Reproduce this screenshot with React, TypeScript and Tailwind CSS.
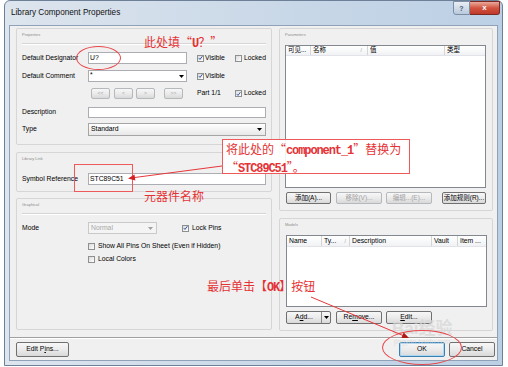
import React from "react";

type Kids = { children?: React.ReactNode; className?: string };

// small windows 7 checkbox
const Check = ({ on }: { on?: boolean }) => (
  <span className="flex h-[7px] w-[7px] shrink-0 items-center justify-center border border-[#8e8f8f] bg-linear-to-br from-[#dadada] to-white">
    {on && (
      <svg width="6" height="6" viewBox="0 0 6 6">
        <path d="M0.9 3.1 L2.4 4.7 L5.3 0.8" fill="none" stroke="#24489c" strokeWidth="1.1" />
      </svg>
    )}
  </span>
);

const Btn = ({
  children,
  className = "",
  disabled,
  primary,
}: Kids & { disabled?: boolean; primary?: boolean }) => (
  <div
    className={`flex items-center justify-center rounded-[2px] border bg-linear-to-b from-[#f7f7f7] via-[#ebebeb] to-[#d9d9d9] ${
      primary ? "border-[#3c7fb1]" : disabled ? "border-[#b5b9bc]" : "border-[#707070]"
    } ${disabled ? "text-[#a3a3a3]" : "text-black"} ${className}`}
  >
    {children}
  </div>
);

const Arrow = ({ dim }: { dim?: boolean }) => (
  <svg width="5" height="3" viewBox="0 0 5 3" className="shrink-0">
    <path d="M0 0 H5 L2.5 3 Z" fill={dim ? "#a0a0a0" : "#000"} />
  </svg>
);

const Group = ({
  title,
  line,
  className = "",
  children,
}: Kids & { title: string; line?: boolean }) => (
  <div className={`flex flex-col rounded-[2px] border border-[#d6d6d6] bg-[#f0f0f0] ${className}`}>
    <div className="pl-[5px] pt-[3px] text-[4px] leading-[5px] text-[#8c8c8c]">{title}</div>
    {line && <div className="mx-[5px] mt-[6px] h-[2px] border-t border-[#d5d5d5] bg-white" />}
    {children}
  </div>
);

const Row = ({ children, className = "" }: Kids) => (
  <div className={`flex items-center pl-[5px] ${className}`}>{children}</div>
);

const Col = ({ children, className = "" }: Kids) => (
  <div className={`flex h-full shrink-0 items-center border-r border-[#d5d5d5] pl-[2px] ${className}`}>
    {children}
  </div>
);

const cjk = "font-['Noto_Sans_CJK_SC',sans-serif]";
const mono = "font-['Liberation_Mono','Noto_Sans_CJK_SC',monospace] font-bold tracking-[-1.1px]";

export default function App() {
  return (
    <div className="relative h-[367px] w-[508px] overflow-hidden bg-white font-['Liberation_Sans','Noto_Sans_CJK_SC',sans-serif] text-[6.8px] leading-none text-black">
      {/* window */}
      <div className="ml-[4px] flex h-[366px] w-[499px] flex-col rounded-t-[6px] border border-[#6e8097] bg-linear-to-r from-[#dde5ee] via-[#cbd9e8] to-[#bcd0e5]">
        {/* title bar */}
        <div className="flex h-[24px] items-start justify-between">
          <div className="pl-[6px] pt-[8px] text-[8.2px] text-[#111]">Library Component Properties</div>
          <div className="mr-[2px] flex">
            <div className="flex h-[14px] w-[17px] items-center justify-center rounded-bl-[3px] border border-[#7a8ea6] bg-linear-to-b from-[#e9eef4] to-[#b9c9dc] text-[7px] font-bold text-[#4a5a6e]">
              ?
            </div>
            <div className="flex h-[14px] w-[30px] items-center justify-center rounded-br-[3px] border border-l-0 border-[#7d2b22] bg-linear-to-b from-[#e9a99c] via-[#d0533f] to-[#c0392b] text-[8px] font-bold text-white">
              x
            </div>
          </div>
        </div>

        {/* client */}
        <div className="mx-[4px] mb-[4px] flex flex-1 flex-col border border-[#8fa2b7] bg-[#f0f0f0]">
          <div className="flex gap-[7px] pl-[6px] pt-[2px]">
            {/* left column */}
            <div className="flex w-[256px] flex-col">
              <Group title="Properties" line className="h-[117px]">
                <Row className="mt-[7px] h-[12px]">
                  <span className="w-[66px]">Default Designator</span>
                  <div className="flex h-full w-[99px] items-center border border-[#abadb3] bg-white pl-[1px]">U?</div>
                  <div className="ml-[10px] flex w-[38px] items-center gap-[1px]">
                    <Check on />
                    Visible
                  </div>
                  <div className="flex items-center gap-[2px]">
                    <Check />
                    Locked
                  </div>
                </Row>
                <Row className="mt-[6px] h-[12px]">
                  <span className="w-[66px]">Default Comment</span>
                  <div className="flex h-full w-[99px] items-start justify-between border border-[#abadb3] bg-white pl-[1px] pr-[2px] pt-[1px]">
                    *
                    <span className="self-center">
                      <Arrow />
                    </span>
                  </div>
                  <div className="ml-[10px] flex w-[38px] items-center gap-[1px]">
                    <Check on />
                    Visible
                  </div>
                </Row>
                <Row className="mt-[6px] h-[11px]">
                  <span className="w-[66px]" />
                  <Btn disabled className="ml-[3px] h-full w-[19px] rounded-[1px] text-[5px]">&lt;&lt;</Btn>
                  <Btn disabled className="ml-[4px] h-full w-[19px] rounded-[1px] text-[5px]">&lt;</Btn>
                  <Btn disabled className="ml-[3px] h-full w-[19px] rounded-[1px] text-[5px]">&gt;</Btn>
                  <Btn disabled className="ml-[9px] h-full w-[19px] rounded-[1px] text-[5px]">&gt;&gt;</Btn>
                  <span className="ml-[14px] w-[38px]">Part 1/1</span>
                  <div className="flex items-center gap-[2px]">
                    <Check on />
                    Locked
                  </div>
                </Row>
                <Row className="mt-[8px] h-[11px]">
                  <span className="w-[66px]">Description</span>
                  <div className="h-full w-[178px] border border-[#abadb3] bg-white" />
                </Row>
                <Row className="mt-[5px] h-[13px]">
                  <span className="w-[66px]">Type</span>
                  <div className="flex h-full w-[178px] items-center justify-between border border-[#a5a5a5] bg-linear-to-b from-white to-[#e8e8e8] pl-[2px] pr-[3px]">
                    Standard
                    <Arrow />
                  </div>
                </Row>
              </Group>

              <Group title="Library Link" className="mt-[7px] h-[40px]">
                <Row className="mt-[12px] h-[12px]">
                  <span className="w-[66px]">Symbol Reference</span>
                  <div className="flex h-full w-[178px] items-center border border-[#abadb3] bg-white pl-[1px]">STC89C51</div>
                </Row>
              </Group>

              <Group title="Graphical" line className="mt-[6px] h-[132px]">
                <Row className="mt-[7px] h-[12px]">
                  <span className="w-[66px]">Mode</span>
                  <div className="flex h-full w-[69px] items-center justify-between border border-[#c9c9c9] bg-[#f4f4f4] pl-[2px] pr-[3px] text-[#a8a8a8]">
                    Normal
                    <Arrow dim />
                  </div>
                  <div className="ml-[25px] flex items-center gap-[3px]">
                    <Check on />
                    Lock Pins
                  </div>
                </Row>
                <Row className="mt-[8px] h-[8px] pl-[71px]">
                  <div className="flex items-center gap-[3px]">
                    <Check />
                    Show All Pins On Sheet (Even if Hidden)
                  </div>
                </Row>
                <Row className="mt-[5px] h-[8px] pl-[71px]">
                  <div className="flex items-center gap-[3px]">
                    <Check />
                    Local Colors
                  </div>
                </Row>
              </Group>
            </div>

            {/* right column */}
            <div className="flex w-[214px] flex-col">
              <Group title="Parameters" className="h-[183px]">
                <div className="ml-[5px] mt-[8px] flex h-[143px] w-[201px] flex-col border border-[#828790] bg-white">
                  <div className="flex h-[10px] border-b border-[#e2e3ea] bg-linear-to-b from-white to-[#f1f2f4] text-[6.5px]">
                    <Col className="w-[25px]">可见...</Col>
                    <Col className="w-[57px] justify-between pr-[5px]">
                      <span>名称</span>
                      <span className="text-[5px] text-[#999]">/</span>
                    </Col>
                    <Col className="w-[77px]">值</Col>
                    <Col className="flex-1 border-r-0">类型</Col>
                  </div>
                </div>
                <div className="ml-[6px] mt-[4px] flex h-[12px] text-[6.5px]">
                  <Btn className="w-[45px]">添加(A)...</Btn>
                  <Btn disabled className="ml-[5px] w-[46px]">移除(V)...</Btn>
                  <Btn disabled className="ml-[4px] w-[46px]">编辑...(E)...</Btn>
                  <Btn className="ml-[10px] w-[44px]">添加规则(R)...</Btn>
                </div>
              </Group>

              <Group title="Models" className="mt-[7px] h-[113px]">
                <div className="ml-[6px] mt-[8px] flex h-[72px] w-[201px] flex-col border border-[#828790] bg-white">
                  <div className="flex h-[11px] border-b border-[#e2e3ea] bg-linear-to-b from-white to-[#f1f2f4]">
                    <Col className="w-[35px]">Name</Col>
                    <Col className="w-[28px] justify-between pr-[3px]">
                      <span>Ty...</span>
                      <span className="text-[5px] text-[#999]">/</span>
                    </Col>
                    <Col className="w-[82px]">Description</Col>
                    <Col className="w-[26px]">Vault</Col>
                    <Col className="flex-1 border-r-0">Item ...</Col>
                  </div>
                </div>
                <div className="ml-[6px] mt-[4px] flex h-[13px]">
                  <Btn className="w-[45px] justify-between">
                    <span className="flex-1 text-center">
                      A<span className="underline">d</span>d...
                    </span>
                    <span className="flex h-full w-[9px] items-center justify-center border-l border-[#8a8a8a]">
                      <Arrow />
                    </span>
                  </Btn>
                  <Btn className="ml-[5px] w-[46px]">
                    Re<span className="underline">m</span>ove...
                  </Btn>
                  <Btn className="ml-[4px] w-[46px]">
                    <span className="underline">E</span>dit...
                  </Btn>
                </div>
              </Group>
            </div>
          </div>

          <div className="mt-[6px] h-[2px] border-t border-[#a0a0a0] bg-white" />

          <div className="mt-[3px] flex h-[15px] pl-[6px] pr-[2px]">
            <Btn className="w-[53px]">
              Edit P<span className="underline">i</span>ns...
            </Btn>
            <div className="flex-1" />
            <Btn primary className="w-[46px] shadow-[inset_0_0_0_1px_#a9d8f5]">OK</Btn>
            <Btn className="ml-[4px] w-[46px]">Cancel</Btn>
          </div>
        </div>
      </div>

      {/* baidu watermark */}
      <div className="pointer-events-none absolute left-[392px] top-[318px] flex flex-col items-center text-[#d6d6d6] opacity-70">
        <span className="text-[17px] font-bold leading-[18px]">Bai<span className={cjk}>经验</span></span>
        <span className="text-[7px]">jingyan.baidu.com</span>
      </div>

      {/* red annotations */}
      <div className="pointer-events-none absolute left-[76px] top-[46px] h-[24px] w-[45px] rounded-[50%] border border-[#e8474a]" />
      <div className={`absolute left-[144px] top-[35px] text-[12px] leading-[14px] text-[#e53234] ${cjk}`}>
        此处填“<span className={mono}>U</span>？”
      </div>

      <div className="pointer-events-none absolute left-[74px] top-[164px] h-[28px] w-[59px] border border-[#ee5a5c]" />
      <div className={`absolute left-[144px] top-[189px] text-[12px] leading-[14px] text-[#e53234] ${cjk}`}>元器件名称</div>

      <div className="absolute left-[222px] top-[139px] h-[35px] w-[188px] border border-[#ee5a5c] bg-white/90 pl-[3px] pt-[1px] text-[12px] leading-[15px] text-[#e53234]">
        <div className="whitespace-nowrap">
          <span className={cjk}>将此处的“</span>
          <span className={mono}>component_1</span>
          <span className={cjk}>”替换为</span>
        </div>
        <div className="whitespace-nowrap">
          <span className={cjk}>“</span>
          <span className={mono}>STC89C51</span>
          <span className={cjk}>”。</span>
        </div>
      </div>

      <div className={`absolute left-[207px] top-[279px] whitespace-nowrap text-[12px] leading-[14px] text-[#e53234] ${cjk}`}>
        最后单击【<span className={mono}>OK</span>】按钮
      </div>

      <div className="pointer-events-none absolute left-[382px] top-[330px] h-[35px] w-[80px] rounded-[50%] border border-[#e8474a]" />

      <svg className="pointer-events-none absolute left-0 top-0" width="508" height="367" viewBox="0 0 508 367">
        <line x1="222" y1="166" x2="134" y2="177.6" stroke="#e8373a" strokeWidth="1" />
        <polygon points="128,178.5 135.3,180.6 134.5,174.6" fill="#d42020" />
        <line x1="311" y1="297" x2="403" y2="335.5" stroke="#e8373a" strokeWidth="1" />
        <polygon points="409,338 401.4,338.1 403.7,332.5" fill="#b01818" />
      </svg>
    </div>
  );
}
